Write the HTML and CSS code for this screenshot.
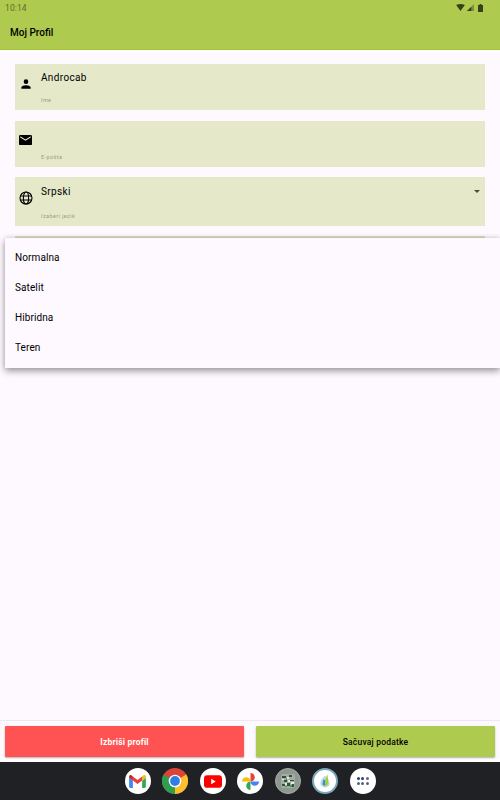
FILE: index.html
```html
<!DOCTYPE html>
<html lang="sr">
<head>
<meta charset="utf-8">
<title>Moj Profil</title>
<link rel="stylesheet" href="styles.css">
</head>
<body>
<div class="screen">
  <header class="appbar">
    <div class="status">
      <span class="time">10:14</span>
      <span class="status-icons">
        <svg width="9" height="7" viewBox="0 0 10 8"><path d="M0 1.200C3 -.4 7 -.4 10 1.200L5 8z" fill="#38421a"/></svg>
        <svg width="7" height="7" viewBox="0 0 8 8"><path d="M0 8L8 0V8z" fill="#7d8f3c"/><path d="M0 8L5 3V8z" fill="#38421a"/></svg>
        <svg class="battery" width="5" height="8" viewBox="0 0 5 8"><path d="M1.500 0H3.500V1H5V8H0V1H1.500z" fill="#38421a"/></svg>
      </span>
    </div>
    <h1 class="title">Moj Profil</h1>
  </header>

  <main class="form">
    <div class="field field-name">
      <svg class="field-icon" width="14" height="14" viewBox="0 0 24 24"><path d="M12 12a4 4 0 1 0 0-8 4 4 0 0 0 0 8zm0 2c-2.700 0-8 1.300-8 4v2h16v-2c0-2.700-5.300-4-8-4z"/></svg>
      <div class="field-body">
        <div class="value">Androcab</div>
        <div class="label">Ime</div>
      </div>
    </div>
    <div class="field field-mail">
      <svg class="field-icon" width="13" height="10.400" viewBox="2 4 20 16"><path d="M20 4H4c-1.100 0-2 .9-2 2v12c0 1.100.9 2 2 2h16c1.100 0 2-.9 2-2V6c0-1.100-.9-2-2-2zm0 4l-8 5-8-5V6l8 5 8-5v2z"/></svg>
      <div class="field-body">
        <div class="value"></div>
        <div class="label">E-pošta</div>
      </div>
    </div>
    <div class="field field-lang">
      <svg class="field-icon" width="14" height="14" viewBox="0 0 14 14"><g fill="none" stroke="#000" stroke-width="1.100"><circle cx="7" cy="7" r="6"/><ellipse cx="7" cy="7" rx="2.600" ry="6"/><path d="M1.400 5h11.200M1.400 9h11.200"/></g></svg>
      <div class="field-body">
        <div class="value">Srpski</div>
        <div class="label">Izaberi jezik</div>
      </div>
      <span class="caret"></span>
    </div>
    <div class="field field-map"></div>
  </main>

  <ul class="menu">
    <li class="menu-item">Normalna</li>
    <li class="menu-item">Satelit</li>
    <li class="menu-item">Hibridna</li>
    <li class="menu-item">Teren</li>
  </ul>

  <footer class="actions">
    <button class="btn btn-delete">Izbriši profil</button>
    <button class="btn btn-save">Sačuvaj podatke</button>
  </footer>

  <nav class="dock">
    <span class="app app-white">
      <svg width="17" height="13" viewBox="0 0 18 14">
        <path d="M0 3V12.500C0 13.300.6 14 1.400 14H4V6z" fill="#4285f4"/>
        <path d="M18 3V12.500C18 13.300 17.400 14 16.600 14H14V6z" fill="#34a853"/>
        <path d="M14 1.500V6L18 3V1.700C18 .3 16.300-.4 15.300.5z" fill="#fbbc04"/>
        <path d="M4 6V1.500L9 5.300 14 1.500V6L9 9.700z" fill="#ea4335"/>
        <path d="M0 1.700V3L4 6V1.500L2.700.5C1.700-.4 0 .3 0 1.700z" fill="#c5221f"/>
      </svg>
    </span>
    <span class="app app-bare">
      <svg width="26" height="26" viewBox="0 0 26 26">
        <circle cx="13" cy="13" r="13" fill="#db4437"/>
        <path d="M13 13L24.300 6.500A13 13 0 0 1 13 26z" fill="#fbc02d"/>
        <path d="M13 13L13 26A13 13 0 0 1 1.700 6.500z" fill="#2e9f50"/>
        <circle cx="13" cy="13" r="6.300" fill="#fff"/>
        <circle cx="13" cy="13" r="4.900" fill="#2f7ee8"/>
      </svg>
    </span>
    <span class="app app-white">
      <svg width="18" height="13" viewBox="0 0 20 14">
        <rect width="20" height="14" rx="3.500" fill="#f00"/>
        <path d="M8 4V10L13 7z" fill="#fff"/>
      </svg>
    </span>
    <span class="app app-white">
      <svg width="17" height="17" viewBox="0 0 20 20">
        <path d="M10 10V0a5 5 0 0 1 0 10z" fill="#ea4335"/>
        <path d="M10 10h10a5 5 0 0 1-10 0z" fill="#4285f4"/>
        <path d="M10 10v10a5 5 0 0 1 0-10z" fill="#34a853"/>
        <path d="M10 10H0a5 5 0 0 1 10 0z" fill="#fbbc04"/>
      </svg>
    </span>
    <span class="app app-grey">
      <svg width="14" height="14" viewBox="0 0 14 14">
        <rect width="14" height="14" rx="2" fill="#a3aca5"/>
        <path d="M1 2h4v2H1zM8 1h3v2H8zM3 6h3v2H3zM9 6h4v1H9zM1 10h3v2H1zM6 9h3v3H6zM11 10h2v3h-2z" fill="#33503a"/>
        <path d="M6 3h2v2H6zM1 5h2v1H1zM7 6h2v2H7zM4 9h2v2H4zM10 8h3v2h-3z" fill="#e4e9e4"/>
        <path d="M5 4h1v2H5zM9 11h2v2H9zM4 12h2v1H4z" fill="#3f9a4a"/>
      </svg>
    </span>
    <span class="app app-ring">
      <svg width="12" height="14" viewBox="0 0 14 16">
        <path d="M7 1.500C10 4.500 12.500 7 12.500 10.500A5.500 5 0 0 1 1.500 10.500C1.500 7 4 4.500 7 1.500z" fill="#bcdcef"/>
        <path d="M10 0L11 12 7 14V7z" fill="#a9cb3f"/>
        <path d="M5 6L7 7V14L4 12z" fill="#3c8fc4"/>
      </svg>
    </span>
    <span class="app app-white app-grid">
      <i class="dot dot-navy"></i><i class="dot dot-navy"></i><i class="dot dot-plum"></i>
      <i class="dot dot-slate"></i><i class="dot dot-slate"></i><i class="dot dot-slate"></i>
    </span>
  </nav>
</div>
</body>
</html>
```
FILE: styles.css
```css
* { box-sizing: border-box; }
html, body { margin: 0; padding: 0; }
body { font-family: Roboto, "Liberation Sans", sans-serif; background: #fef8ff; color: #000; }

.screen { position: relative; width: 500px; height: 800px; display: flex; flex-direction: column; background: #fef8ff; overflow: hidden; }

.appbar { height: 50px; flex: none; background: #afcb4f; border-bottom: 1px solid #a3c22f; padding: 0 10px; }
.status { height: 15px; display: flex; justify-content: space-between; align-items: center; padding-right: 7px; margin-left: -5px; }
.time { font-size: 8.500px; letter-spacing: .1px; color: #5c6b2e; }
.status-icons { display: flex; gap: 2px; align-items: center; }
.status-icons svg { display: block; }
.battery { margin-left: 2px; }
.title { margin: 11px 0 0; font-size: 10px; line-height: 14px; font-weight: 500; }

.form { flex: 1; padding: 14px 15px 0; display: flex; flex-direction: column; gap: 10px; }
.field { flex: none; position: relative; display: flex; background: #e5e9ca; padding-left: 26px; }
.field-name, .field-mail { height: 46px; }
.field-mail { margin-top: 1px; }
.field-lang { height: 49px; }
.field-map { height: 20px; background: #dfdfc4; }
.field-icon { position: absolute; left: 4px; top: 13px; fill: #000; }
.field-mail .field-icon { left: 4px; top: 14px; }
.field-lang .field-icon { top: 14px; }
.field-body { display: flex; flex-direction: column; }
.value { height: 18px; margin-top: 7px; font-size: 10px; line-height: 14px; letter-spacing: .35px; }
.label { margin-top: 7px; font-size: 5.500px; line-height: 8px; letter-spacing: .4px; color: #9b9e86; }
.field-lang .value { margin-top: 8px; }
.field-lang .label { margin-top: 9px; }
.caret { position: absolute; right: 5px; top: 13px; width: 0; height: 0; border: 3px solid transparent; border-top-color: #4a4a42; border-bottom: 0; }

.menu { position: absolute; left: 5px; right: 0; top: 238px; height: 130px; margin: 0; padding: 5px 0; list-style: none; background: #fef8ff; box-shadow: 0 3px 7px rgba(0,0,0,.4), 0 -1px 4px rgba(0,0,0,.08); }
.menu-item { height: 30px; padding-left: 10px; font-size: 10px; line-height: 30px; letter-spacing: .1px; }

.actions { flex: none; height: 42px; padding: 5px 5px 0; display: flex; justify-content: space-between; border-top: 1px solid #eee8ee; background: linear-gradient(#fef8ff 37px, #fff 37px); }
.btn { width: 239px; height: 31px; border: 0; padding: 0; font-family: inherit; font-size: 8.500px; font-weight: 500; letter-spacing: .2px; border-radius: 1px; box-shadow: 0 1px 2px rgba(0,0,0,.3); }
.btn-delete { background: #ff5252; color: #fff; font-weight: 700; }
.btn-save { background: #afcb4f; color: #000; }

.dock { flex: none; height: 38px; background: #202124; display: flex; justify-content: center; align-items: center; gap: 11.500px; }
.app { width: 26px; height: 26px; border-radius: 50%; display: flex; align-items: center; justify-content: center; flex: none; }
.app svg { display: block; }
.app-white { background: #fff; }
.app-bare { background: transparent; }
.app-grey { background: #8e9891; border: 1px solid #a7aeaa; }
.app-ring { background: #fff; border: 2px solid #7aa9bd; }
.app-grid { display: grid; grid-template-columns: repeat(3, 3px); grid-auto-rows: 3px; gap: 1.500px; align-content: center; justify-content: center; }
.dot { display: block; width: 3px; height: 3px; border-radius: 50%; }
.dot-navy { background: #2c3e78; }
.dot-plum { background: #7a5a88; }
.dot-slate { background: #5c6378; }
```
